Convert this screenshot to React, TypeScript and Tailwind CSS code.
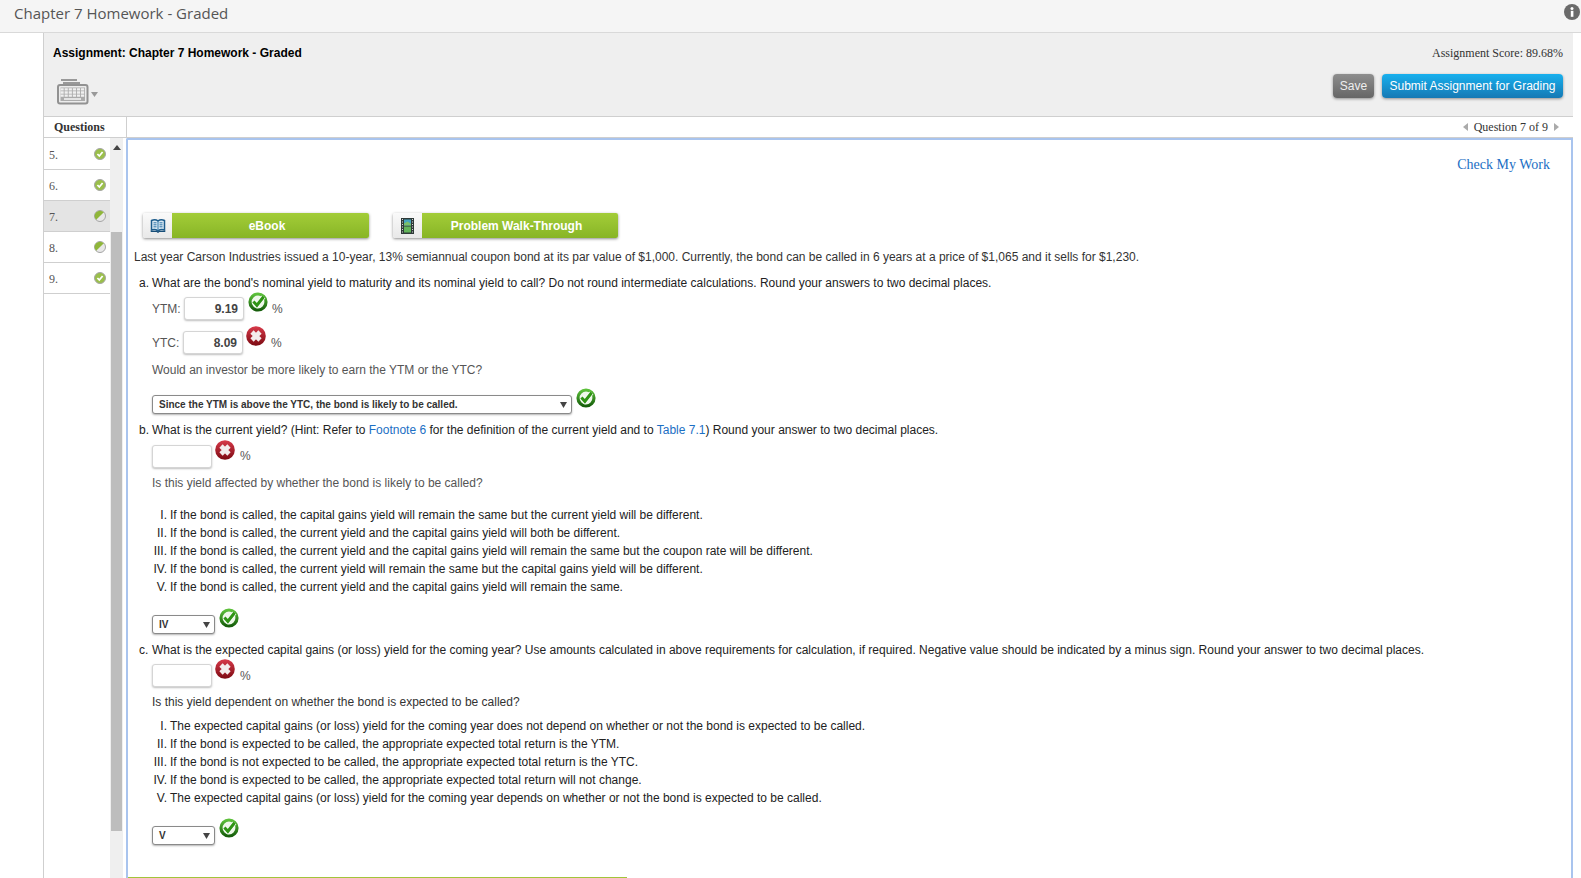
const sans = "font-['Liberation_Sans',Arial,sans-serif]";

const questions = [
  { n: "5.", full: true },
  { n: "6.", full: true },
  { n: "7.", full: false, active: true },
  { n: "8.", full: false },
  { n: "9.", full: true },
];

const StatusDot = ({ full }: { full: boolean }) => (
  <svg width="12" height="12" viewBox="0 0 12 12">
    <circle cx="6" cy="6" r="5.500" fill={full ? "#9abf4a" : "#e8e8e8"} stroke="#a5a5a5" strokeWidth="1" />
    {!full && <path d="M2.200 9.800A5 5 0 0 1 9.800 2.200Z" fill="#8fb63a" />}
    {full && <path d="M3.400 6l1.900 2 3.300-4" fill="none" stroke="#fff" strokeWidth="1.800" />}
  </svg>
);

const CheckMark = () => (
  <svg width="20" height="20" viewBox="0 0 20 20" className="shrink-0">
    <defs>
      <linearGradient id="ring" x1="0" y1="0" x2="0" y2="1">
        <stop offset="0" stopColor="#5cc03a" />
        <stop offset="1" stopColor="#165e0b" />
      </linearGradient>
    </defs>
    <circle cx="10" cy="10" r="8" fill="#eef8ea" stroke="url(#ring)" strokeWidth="3.200" />
    <path d="M5.400 9.400l3.500 3.900L15.600 4.800" fill="none" stroke="#fff" strokeWidth="4.400" />
    <path d="M5.400 9.400l3.500 3.900L15.600 4.800" fill="none" stroke="#2f9414" strokeWidth="3" />
  </svg>
);

const CrossMark = () => (
  <svg width="20" height="20" viewBox="0 0 20 20" className="shrink-0">
    <defs>
      <linearGradient id="cross" x1="0" y1="0" x2="0" y2="1">
        <stop offset="0" stopColor="#d83a4a" />
        <stop offset="1" stopColor="#7c0a12" />
      </linearGradient>
    </defs>
    <circle cx="10" cy="10" r="9.800" fill="url(#cross)" />
    <path d="M6 6l8 8M14 6l-8 8" stroke="#f3ecec" strokeWidth="4.600" />
  </svg>
);

const TextBox = ({ value }: { value?: string }) => (
  <div className="h-[23px] w-[60px] shrink-0 rounded-[3px] border border-[#d5d5d5] bg-white pr-[5px] text-right text-[12px] font-bold leading-[22px] text-[#444] shadow-[0_1px_2px_rgba(0,0,0,0.25)]">
    {value}
  </div>
);

const Dropdown = ({ label, width }: { label: string; width: string }) => (
  <div className={`${width} flex h-[19px] shrink-0 items-center justify-between rounded-[3px] border border-[#8a8a8a] bg-white pl-[6px] pr-[4px] text-[10px] font-bold text-[#333] shadow-[0_1px_2px_rgba(0,0,0,0.3)]`}>
    <span>{label}</span>
    <svg width="7" height="6" viewBox="0 0 7 6"><path d="M0 0h7L3.500 6z" fill="#444" /></svg>
  </div>
);

const Percent = () => <span className="text-[12px] text-[#555]">%</span>;

const GreenButton = ({ label, width, icon }: { label: string; width: string; icon: React.ReactNode }) => (
  <div className={`${width} flex h-[25px] overflow-hidden rounded-[2px] shadow-[0_1px_3px_rgba(0,0,0,0.45)]`}>
    <div className="flex w-[29px] shrink-0 items-center justify-center bg-gradient-to-b from-[#fafafa] to-[#e8e8e8]">{icon}</div>
    <div className="flex flex-1 items-center justify-center bg-gradient-to-b from-[#a3cd38] to-[#88b526] pr-[7px] text-[12px] font-bold text-white">{label}</div>
  </div>
);

const BookIcon = () => (
  <svg width="16" height="15" viewBox="0 0 16 15">
    <path d="M1.500 2.500Q5 .8 8 2.800Q11 .8 14.500 2.500V12Q11 10.800 8 12.800Q5 10.800 1.500 12Z" fill="#d9e8f2" stroke="#1d5c8c" strokeWidth="1.500" />
    <path d="M8 3v9.500M3.500 4.800h3M3.500 6.800h3M3.500 8.800h3M9.500 4.800h3M9.500 6.800h3M9.500 8.800h3" stroke="#2f76a8" strokeWidth="1" />
    <path d="M.7 13.300h6l1.300 1 1.300-1h6" fill="none" stroke="#174d77" strokeWidth="1.200" />
  </svg>
);

const FilmIcon = () => (
  <svg width="13" height="16" viewBox="0 0 13 16">
    <rect width="13" height="16" fill="#2f3a38" />
    <rect x="3" y="1.500" width="7" height="6" fill="#45a3bf" />
    <rect x="3" y="8.500" width="7" height="6" fill="#62b45a" />
    <path d="M3 5.500l3.500-2 3.500 2.500v1.500H3z" fill="#7bc06a" />
    <path d="M1 1.500h1M1 4h1M1 6.500h1M1 9h1M1 11.500h1M1 14h1M11 1.500h1M11 4h1M11 6.500h1M11 9h1M11 11.500h1M11 14h1" stroke="#d8d8d8" strokeWidth="1.200" />
  </svg>
);

const KeyboardIcon = () => (
  <svg width="32" height="26" viewBox="0 0 32 26" fill="none">
    <path d="M4 1h16" stroke="#999" strokeWidth="2" />
    <path d="M6 4h17" stroke="#999" strokeWidth="2" />
    <rect x="1" y="6" width="29.500" height="18.500" rx="2" stroke="#929292" strokeWidth="2" fill="#ececec" />
    <rect x="3.500" y="8.500" width="24.500" height="13.500" fill="#ababab" />
    <path d="M3.500 10.300h24.500M3.500 13.500h24.500M3.500 16.700h24.500" stroke="#f0f0f0" strokeWidth="2.300" strokeDasharray="3.200 0.900" />
    <path d="M7 20h17" stroke="#e4e4e4" strokeWidth="2" />
  </svg>
);

const Options = ({ items }: { items: [string, string][] }) => (
  <div className="text-[12px] leading-[18px] text-[#222]">
    {items.map(([num, text]) => (
      <div key={num} className="flex">
        <span className="w-[18px] shrink-0 pr-[3px] text-right">{num}</span>
        <span>{text}</span>
      </div>
    ))}
  </div>
);

export default function App() {
  return (
    <div className={`h-[878px] overflow-hidden bg-white ${sans}`}>
      {/* top bar */}
      <div className="flex h-[33px] items-start justify-between border-b border-[#d9d9d9] bg-[#f5f5f5] pl-[14px] pr-px">
        <span className="mt-px font-['Open_Sans',sans-serif] text-[15px] leading-[24px] text-[#555]">Chapter 7 Homework - Graded</span>
        <svg width="16" height="16" viewBox="0 0 16 16" className="mt-[4px]">
          <circle cx="8" cy="8" r="8" fill="#6a6a6a" />
          <rect x="6.800" y="6.800" width="2.600" height="6" fill="#fff" />
          <circle cx="8" cy="4.500" r="1.500" fill="#fff" />
        </svg>
      </div>

      <div className="ml-[43px] mr-[8px] border-l border-[#cfcfcf]">
        {/* assignment header */}
        <div className="flex h-[83px] justify-between bg-[#efefef] pl-[9px] pr-[10px]">
          <div>
            <div className="mt-[12px] text-[12px] font-bold leading-[16px] text-black">Assignment: Chapter 7 Homework - Graded</div>
            <div className="ml-[4px] mt-[18px] flex items-end gap-[2px]">
              <KeyboardIcon />
              <svg width="7" height="5" viewBox="0 0 7 5" className="mb-[8px]"><path d="M0 0h7L3.500 5z" fill="#999" /></svg>
            </div>
          </div>
          <div className="flex flex-col items-end">
            <div className="mt-[12px] font-['Liberation_Serif',serif] text-[12px] leading-[16px] text-[#333]">Assignment Score: 89.68%</div>
            <div className="mt-[13px] flex gap-[8px]">
              <div className="flex h-[24px] w-[41px] items-center justify-center rounded-[4px] bg-gradient-to-b from-[#8e8e8e] to-[#666] text-[12px] text-[#eee] shadow-[0_1px_3px_rgba(0,0,0,0.4)]">Save</div>
              <div className="flex h-[24px] w-[181px] items-center justify-center rounded-[4px] bg-gradient-to-b from-[#18b0ee] to-[#1579b4] text-[12px] text-white shadow-[0_1px_3px_rgba(0,0,0,0.4)]">Submit Assignment for Grading</div>
            </div>
          </div>
        </div>

        {/* tabs row */}
        <div className="flex h-[22px] border-y border-[#cfcfcf] bg-white font-['Liberation_Serif',serif] text-[12px] text-[#333]">
          <div className="flex w-[83px] items-center border-r border-[#cfcfcf] pl-[10px] font-bold">Questions</div>
          <div className="flex flex-1 items-center justify-end gap-[6px] pr-[14px]">
            <svg width="5" height="8" viewBox="0 0 5 8"><path d="M5 0v8L0 4z" fill="#aaa" /></svg>
            <span>Question 7 of 9</span>
            <svg width="5" height="8" viewBox="0 0 5 8"><path d="M0 0v8l5-4z" fill="#aaa" /></svg>
          </div>
        </div>

        <div className="flex">
          {/* question list */}
          <div className="flex h-[740px] w-[82px] shrink-0">
            <div className="w-[66px] pt-px font-['Liberation_Serif',serif] text-[12px] text-[#555]">
              {questions.map((q) => (
                <div key={q.n} className={`flex h-[31px] items-center justify-between border-b border-[#cfcfcf] pl-[5px] pr-[4px] ${q.active ? "bg-[#e4e4e4]" : "bg-white"}`}>
                  <span className="mt-[2px]">{q.n}</span>
                  <StatusDot full={q.full} />
                </div>
              ))}
            </div>
            <div className="flex w-[13px] flex-col items-center bg-[#efefef]">
              <svg width="8" height="5" viewBox="0 0 8 5" className="mt-[7px]"><path d="M4 0l4 5H0z" fill="#444" /></svg>
              <div className="mt-[82px] h-[599px] w-[11px] bg-[#bdbdbd]" />
            </div>
            <div className="w-[3px]" />
          </div>

          {/* question panel */}
          <div className="h-[740px] flex-1 overflow-hidden rounded-tl-[2px] border-l-2 border-r-2 border-t-2 border-[#a9c4ee] bg-white">
            <div className="flex h-[50px] justify-end pr-[21px] pt-[15px] font-['Liberation_Serif',serif] text-[14px] leading-[20px] text-[#1c6fc4]">Check My Work</div>
            <div className="ml-[15px] mt-[23px] flex gap-[24px]">
              <GreenButton label="eBook" width="w-[226px]" icon={<BookIcon />} />
              <GreenButton label="Problem Walk-Through" width="w-[225px]" icon={<FilmIcon />} />
            </div>

            <div className="ml-[6px] mt-[10px] text-[12px] leading-[18px] text-[#333]">Last year Carson Industries issued a 10-year, 13% semiannual coupon bond at its par value of $1,000. Currently, the bond can be called in 6 years at a price of $1,065 and it sells for $1,230.</div>

            <div className="ml-[11px] mt-[8px] flex text-[12px] leading-[18px] text-[#222]">
              <span className="w-[13px] shrink-0">a.</span>
              <span>What are the bond's nominal yield to maturity and its nominal yield to call? Do not round intermediate calculations. Round your answers to two decimal places.</span>
            </div>

            <div className="ml-[24px] flex h-[34px] items-start text-[12px] text-[#555]">
              <span className="mt-[9px] w-[32px] leading-[16px]">YTM:</span>
              <div className="mt-[5px]"><TextBox value="9.19" /></div>
              <div className="ml-[4px]"><CheckMark /></div>
              <span className="ml-[4px] mt-[9px] leading-[16px]"><Percent /></span>
            </div>
            <div className="ml-[24px] flex h-[34px] items-start text-[12px] text-[#555]">
              <span className="mt-[9px] w-[31px] leading-[16px]">YTC:</span>
              <div className="mt-[5px]"><TextBox value="8.09" /></div>
              <div className="ml-[3px]"><CrossMark /></div>
              <span className="ml-[5px] mt-[9px] leading-[16px]"><Percent /></span>
            </div>
            <div className="ml-[24px] mt-[1px] text-[12px] leading-[18px] text-[#555]">Would an investor be more likely to earn the YTM or the YTC?</div>
            <div className="ml-[24px] mt-[9px] flex h-[27px] items-start gap-[4px]">
              <div className="mt-[7px]"><Dropdown label="Since the YTM is above the YTC, the bond is likely to be called." width="w-[420px]" /></div>
              <CheckMark />
            </div>

            <div className="ml-[11px] mt-[6px] flex text-[12px] leading-[18px] text-[#222]">
              <span className="w-[13px] shrink-0">b.</span>
              <span>What is the current yield? (Hint: Refer to <span className="text-[#1c6fc4]">Footnote 6</span> for the definition of the current yield and to <span className="text-[#1c6fc4]">Table 7.1</span>) Round your answer to two decimal places.</span>
            </div>
            <div className="ml-[24px] mt-[1px] flex h-[34px] items-start">
              <div className="mt-[5px]"><TextBox /></div>
              <div className="ml-[3px]"><CrossMark /></div>
              <span className="ml-[5px] mt-[7px] leading-[16px]"><Percent /></span>
            </div>
            <div className="ml-[24px] text-[12px] leading-[18px] text-[#555]">Is this yield affected by whether the bond is likely to be called?</div>
            <div className="ml-[24px] mt-[14px]">
              <Options items={[
                ["I.", "If the bond is called, the capital gains yield will remain the same but the current yield will be different."],
                ["II.", "If the bond is called, the current yield and the capital gains yield will both be different."],
                ["III.", "If the bond is called, the current yield and the capital gains yield will remain the same but the coupon rate will be different."],
                ["IV.", "If the bond is called, the current yield will remain the same but the capital gains yield will be different."],
                ["V.", "If the bond is called, the current yield and the capital gains yield will remain the same."],
              ]} />
            </div>
            <div className="ml-[24px] mt-[12px] flex h-[27px] items-start gap-[4px]">
              <div className="mt-[7px]"><Dropdown label="IV" width="w-[63px]" /></div>
              <CheckMark />
            </div>

            <div className="ml-[11px] mt-[6px] flex text-[12px] leading-[18px] text-[#222]">
              <span className="w-[13px] shrink-0">c.</span>
              <span>What is the expected capital gains (or loss) yield for the coming year? Use amounts calculated in above requirements for calculation, if required. Negative value should be indicated by a minus sign. Round your answer to two decimal places.</span>
            </div>
            <div className="ml-[24px] flex h-[34px] items-start">
              <div className="mt-[5px]"><TextBox /></div>
              <div className="ml-[3px]"><CrossMark /></div>
              <span className="ml-[5px] mt-[8px] leading-[16px]"><Percent /></span>
            </div>
            <div className="ml-[24px] text-[12px] leading-[18px] text-[#333]">Is this yield dependent on whether the bond is expected to be called?</div>
            <div className="ml-[24px] mt-[6px]">
              <Options items={[
                ["I.", "The expected capital gains (or loss) yield for the coming year does not depend on whether or not the bond is expected to be called."],
                ["II.", "If the bond is expected to be called, the appropriate expected total return is the YTM."],
                ["III.", "If the bond is not expected to be called, the appropriate expected total return is the YTC."],
                ["IV.", "If the bond is expected to be called, the appropriate expected total return will not change."],
                ["V.", "The expected capital gains (or loss) yield for the coming year depends on whether or not the bond is expected to be called."],
              ]} />
            </div>
            <div className="ml-[24px] mt-[11px] flex h-[27px] items-start gap-[4px]">
              <div className="mt-[8px]"><Dropdown label="V" width="w-[63px]" /></div>
              <CheckMark />
            </div>
            <div className="mt-[32px] h-px w-[499px] bg-[#a2c43a]" />
          </div>
        </div>
      </div>
    </div>
  );
}
